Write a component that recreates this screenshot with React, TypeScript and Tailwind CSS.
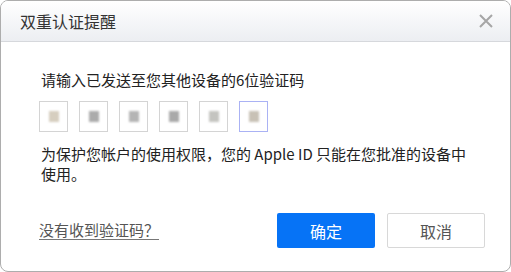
import React from 'react';

const cells = [
  { color: 'bg-[#d6cebf]', frame: 'border-[#d4d4d4]' },
  { color: 'bg-[#ababab]', frame: 'border-[#d4d4d4]' },
  { color: 'bg-[#b4b4b4]', frame: 'border-[#d4d4d4]' },
  { color: 'bg-[#a9a9a9]', frame: 'border-[#d4d4d4]' },
  { color: 'bg-[#c4c4c0]', frame: 'border-[#d4d4d4]' },
  { color: 'bg-[#c8c1b5]', frame: 'border-[#aab2f4]' },
];

export default function App() {
  return (
    <div
      className="w-[511px] h-[272px] bg-white border border-[#adadad] rounded-[8px] overflow-hidden flex flex-col text-[#222]"
      style={{ fontFamily: '"Noto Sans CJK SC", "Noto Sans", sans-serif' }}
    >
      <div className="h-[41px] shrink-0 flex items-center justify-between pl-[19px] pr-[16px] bg-gradient-to-b from-white to-[#eceef2] border-b border-[#d6d8dc]">
        <span className="text-[16px] text-[#333] leading-none">双重认证提醒</span>
        <svg width="16" height="16" viewBox="0 0 16 16" className="text-[#a6a6a6]">
          <path d="M2 2L14 14M14 2L2 14" stroke="currentColor" strokeWidth="2" />
        </svg>
      </div>

      <div className="flex-1 flex flex-col pl-[40px] pr-[25px] pt-[28px] pb-[23px]">
        <p className="text-[15px] leading-[20px]">请输入已发送至您其他设备的6位验证码</p>

        <div className="flex gap-[11px] mt-[11px] -ml-[2px]">
          {cells.map((c, i) => (
            <div
              key={i}
              className={`w-[29px] h-[31px] border flex items-center justify-center ${c.frame}`}
            >
              <div className={`w-[10px] h-[11px] blur-[1px] ${c.color}`} />
            </div>
          ))}
        </div>

        <p className="text-[15px] leading-[20px] mt-[12px]">
          为保护您帐户的使用权限，您的 Apple ID 只能在您批准的设备中
          <br />
          使用。
        </p>

        <div className="mt-auto flex items-center justify-between">
          <a className="-ml-[2px] text-[15px] text-[#555] underline underline-offset-[3px] decoration-[#777]">
            没有收到验证码？
          </a>
          <div className="flex gap-[12px]">
            <button className="w-[98px] h-[35px] rounded-[2px] bg-[#0673f6] text-white text-[16px]">
              确定
            </button>
            <button className="w-[98px] h-[35px] rounded-[2px] bg-white border border-[#d8d8d8] text-[#555] text-[16px]">
              取消
            </button>
          </div>
        </div>
      </div>
    </div>
  );
}
